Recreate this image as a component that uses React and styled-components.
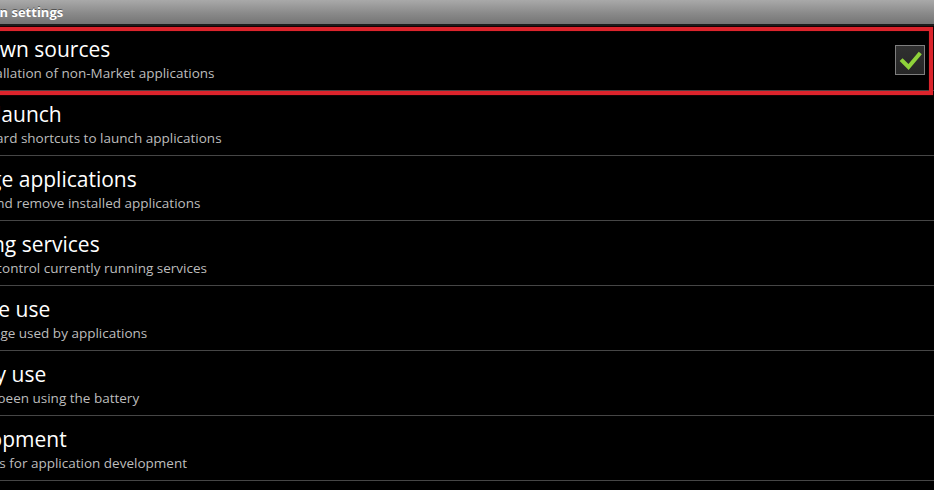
import React from "react";
import styled, { createGlobalStyle } from "styled-components";

const Global = createGlobalStyle`
  html, body { margin: 0; padding: 0; background: #000; overflow: hidden; }
  #root { width: 934px; height: 490px; }
`;

const Screen = styled.div`
  width: 934px;
  height: 490px;
  overflow: hidden;
  background: #000;
  font-family: "Open Sans", "DejaVu Sans", sans-serif;
`;

const Shifted = styled.div`
  width: 1014px;
  margin-left: -80px;
`;

const TitleBar = styled.div`
  height: 24px;
  border-bottom: 2px solid #1c1c1c;
  background: linear-gradient(#a9a9a9, #8a8a8a 55%, #747474);
  display: flex;
  align-items: center;
  padding-left: 14px;
  color: #fff;
  font-weight: 700;
  font-size: 13px;
  text-shadow: 0 -1px 0 rgba(0, 0, 0, 0.45);
`;

const Row = styled.div`
  position: relative;
  height: 64px;
  border-bottom: 1px solid #464646;
  display: flex;
  align-items: center;
  padding-left: 14px;
  padding-right: 9px;
`;

const Highlight = styled.div`
  position: absolute;
  top: 1px;
  bottom: -5px;
  left: 0;
  right: 1px;
  border: 4px solid #dc242c;
  box-shadow: inset 0 0 1px #a01018, 0 0 1px #a01018;
  pointer-events: none;
`;

const Texts = styled.div`
  flex: 1;
  display: flex;
  flex-direction: column;
  align-self: flex-start;
  padding-top: 10px;
`;

const Title = styled.div`
  color: #fff;
  font-size: 21px;
  line-height: 26px;
  margin-left: 1px;
  white-space: nowrap;
`;

const Summary = styled.div`
  color: #bdbdbd;
  font-size: 13.5px;
  line-height: 20px;
  margin-top: 1px;
  margin-left: 1px;
  white-space: nowrap;
`;

const CheckBox = styled.div`
  width: 28px;
  height: 28px;
  border: 1px solid #7e7e7e;
  background: linear-gradient(#303030, #262626);
  display: flex;
  align-items: center;
  justify-content: center;
  margin-top: 3px;
`;

const items = [
  { title: "Unknown sources", summary: "Allow installation of non-Market applications", checked: true, selected: true },
  { title: "Quick launch", summary: "Set keyboard shortcuts to launch applications" },
  { title: "Manage applications", summary: "Manage and remove installed applications" },
  { title: "Running services", summary: "View and control currently running services" },
  { title: "Storage use", summary: "View storage used by applications" },
  { title: "Battery use", summary: "What has been using the battery" },
  { title: "Development", summary: "Set options for application development" },
];

const Check = () => (
  <svg width="28" height="28" viewBox="0 0 28 28">
    <path d="M6.5 15 L12.5 21 L23 8.5" fill="none" stroke="#8fd23a" strokeWidth="4" strokeLinecap="square" strokeLinejoin="miter" />
  </svg>
);

export default function App() {
  return (
    <Screen>
      <Global />
      <Shifted>
        <TitleBar>Application settings</TitleBar>
        {items.map((it) => (
          <Row key={it.title}>
            <Texts>
              <Title>{it.title}</Title>
              <Summary>{it.summary}</Summary>
            </Texts>
            {it.checked && (
              <CheckBox>
                <Check />
              </CheckBox>
            )}
            {it.selected && <Highlight />}
          </Row>
        ))}
      </Shifted>
    </Screen>
  );
}
